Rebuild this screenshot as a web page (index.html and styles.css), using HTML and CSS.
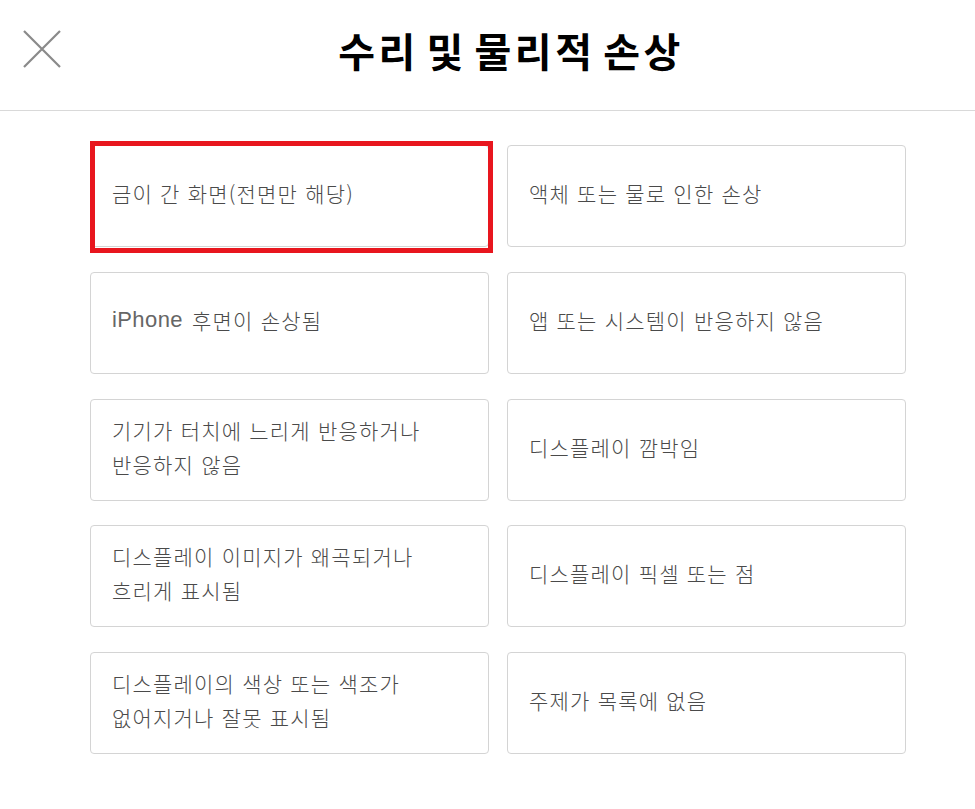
FILE: index.html
```html
<!DOCTYPE html>
<html lang="ko">
<head>
<meta charset="utf-8">
<title>수리 및 물리적 손상</title>
<link rel="stylesheet" href="styles.css">
</head>
<body>
<header class="header">
  <button class="close" aria-label="닫기">
    <svg width="38" height="38" viewBox="0 0 38 38"><path d="M1 1 L37 37 M37 1 L1 37" stroke="#8a8a8a" stroke-width="2.2" fill="none"/></svg>
  </button>
  <h1 class="title">수리 및 물리적 손상</h1>
</header>
<main class="grid">
  <div class="card selected">금이 간 화면(전면만 해당)</div>
  <div class="card">액체 또는 물로 인한 손상</div>
  <div class="card"><span class="latin">iPhone</span>&nbsp;후면이 손상됨</div>
  <div class="card">앱 또는 시스템이 반응하지 않음</div>
  <div class="card">기기가 터치에 느리게 반응하거나<br>반응하지 않음</div>
  <div class="card">디스플레이 깜박임</div>
  <div class="card">디스플레이 이미지가 왜곡되거나<br>흐리게 표시됨</div>
  <div class="card">디스플레이 픽셀 또는 점</div>
  <div class="card">디스플레이의 색상 또는 색조가<br>없어지거나 잘못 표시됨</div>
  <div class="card">주제가 목록에 없음</div>
</main>
</body>
</html>
```

FILE: styles.css
```css
html, body {
  margin: 0;
  padding: 0;
  background: #fff;
  font-family: "Noto Sans CJK KR", "Noto Sans", sans-serif;
}
.header {
  position: relative;
  height: 110px;
  border-bottom: 1px solid #d9d9d9;
  display: flex;
  align-items: center;
  justify-content: center;
  padding-left: 47px;
  box-sizing: content-box;
}
.close {
  position: absolute;
  left: 23px;
  top: 30px;
  width: 38px;
  height: 38px;
  padding: 0;
  border: 0;
  background: none;
}
.close svg { display: block; }
.title {
  margin: 0;
  margin-top: -10px;
  font-size: 40px;
  font-weight: 700;
  color: #000;
  letter-spacing: 3.5px;
  word-spacing: -7px;
}
.grid {
  display: grid;
  grid-template-columns: 399px 399px;
  grid-auto-rows: 102px;
  column-gap: 18px;
  row-gap: 24.75px;
  margin: 34px 0 0 90px;
}
.card {
  position: relative;
  box-sizing: border-box;
  border: 1px solid #d4d4d4;
  border-radius: 4px;
  display: flex;
  align-items: center;
  padding: 0 10px 6px 21px;
  font-size: 21px;
  font-weight: 300;
  line-height: 34px;
  letter-spacing: 1.2px;
  color: #4a4a4a;
  white-space: nowrap;
}
.card .latin {
  font-family: "Liberation Sans", Arial, sans-serif;
  font-size: 22px;
  letter-spacing: 0.4px;
  margin-right: 2px;
  color: #666;
}
.card.selected::after {
  content: "";
  position: absolute;
  left: -1px;
  top: -5px;
  right: -5px;
  bottom: -7px;
  border: 5px solid #e8161e;
}
```
